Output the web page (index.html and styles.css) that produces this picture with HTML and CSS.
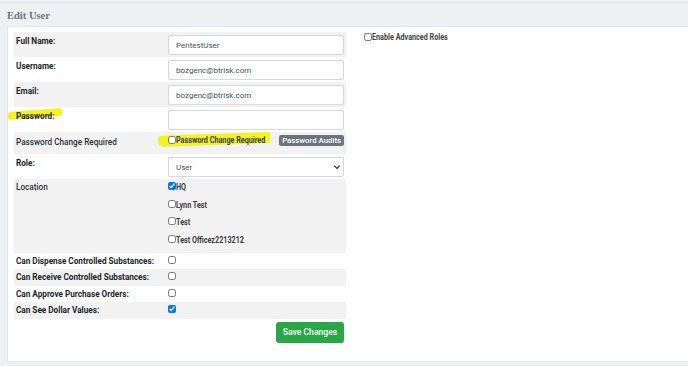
FILE: index.html
```html
<!DOCTYPE html>
<html>
<head>
<meta charset="utf-8">
<link rel="stylesheet" href="styles.css">
</head>
<body>
<div class="page">
  <h1 class="title">Edit User</h1>
  <div class="card">
    <div class="cols">
      <div class="form-col">
        <table class="user-form">
          <colgroup><col class="c-label"><col class="c-value"></colgroup>
          <tr>
            <td class="lbl">Full Name:</td>
            <td class="val"><input class="field" type="text" value="PentestUser"></td>
          </tr>
          <tr>
            <td class="lbl">Username:</td>
            <td class="val"><input class="field" type="text" value="bozgenc@btrisk.com"></td>
          </tr>
          <tr>
            <td class="lbl">Email:</td>
            <td class="val"><input class="field" type="text" value="bozgenc@btrisk.com"></td>
          </tr>
          <tr>
            <td class="lbl hl-cell"><span class="hl hl-pass"></span><span class="txt">Password:</span></td>
            <td class="val"><input class="field" type="password" value=""></td>
          </tr>
          <tr class="pcr-row">
            <td class="lbl plain">Password Change Required</td>
            <td class="val pcr">
              <label class="cb hl-cell"><span class="hl hl-pcr"></span><input type="checkbox"><span class="cond">Password Change Required</span></label>
              <button class="btn-audit" type="button">Password Audits</button>
            </td>
          </tr>
          <tr>
            <td class="lbl">Role:</td>
            <td class="val">
              <div class="select-wrap">
                <select class="field sel"><option>User</option></select>
                <svg class="chev" width="8" height="6" viewBox="0 0 8 6"><path d="M1.2 1.6 L4 4.4 L6.8 1.6" fill="none" stroke="#333" stroke-width="1.2"/></svg>
              </div>
            </td>
          </tr>
          <tr>
            <td class="lbl plain-top">Location</td>
            <td class="val loc">
              <label class="cb loc-item"><input type="checkbox" checked><span class="cond">HQ</span></label>
              <label class="cb loc-item"><input type="checkbox"><span class="cond">Lynn Test</span></label>
              <label class="cb loc-item"><input type="checkbox"><span class="cond">Test</span></label>
              <label class="cb loc-item"><input type="checkbox"><span class="cond">Test Officez2213212</span></label>
            </td>
          </tr>
          <tr class="cb-row">
            <td class="lbl">Can Dispense Controlled Substances:</td>
            <td class="val"><input type="checkbox"></td>
          </tr>
          <tr class="cb-row">
            <td class="lbl">Can Receive Controlled Substances:</td>
            <td class="val"><input type="checkbox"></td>
          </tr>
          <tr class="cb-row">
            <td class="lbl">Can Approve Purchase Orders:</td>
            <td class="val"><input type="checkbox"></td>
          </tr>
          <tr class="cb-row">
            <td class="lbl">Can See Dollar Values:</td>
            <td class="val"><input type="checkbox" checked></td>
          </tr>
        </table>
        <div class="actions">
          <button class="btn-save" type="button">Save Changes</button>
        </div>
      </div>
      <div class="side-col">
        <label class="cb"><input type="checkbox"><span class="cond side-txt">Enable Advanced Roles</span></label>
      </div>
    </div>
  </div>
</div>
</body>
</html>
```
FILE: styles.css
```css
* { box-sizing: border-box; }
html, body { margin: 0; padding: 0; }
body {
  background: #eef0f3;
  font-family: Roboto, "Liberation Sans", sans-serif;
  color: #212529;
  width: 688px;
  height: 366px;
  overflow: hidden;
}
.page {
  border-top: 1px solid #e2e5e9;
  margin-top: 2px;
  padding-left: 7px;
}
.title {
  margin: 0;
  padding: 7px 0 0 0;
  height: 23px;
  font-family: "Roboto Slab", "Liberation Serif", serif;
  font-weight: 700;
  font-size: 10.5px;
  line-height: 12px;
  color: #6c757d;
}
.card {
  background: #fff;
  border: 1px solid #e6e8eb;
  border-right: none;
  width: 700px;
  height: 336px;
  padding: 5px 6px;
  font-size: 8px;
  line-height: 10px;
}
.cols {
  display: flex;
  gap: 18px;
  align-items: flex-start;
}
.form-col { width: 332px; }
.user-form {
  width: 332px;
  border-collapse: collapse;
  table-layout: fixed;
  font-size: 8px;
  line-height: 10px;
}
.c-label { width: 154px; }
.c-value { width: 178px; }
.user-form tr:nth-child(odd) { background: #f2f2f2; }
.user-form td { vertical-align: top; padding: 0; }
.lbl {
  font-weight: 700;
  font-size: 8.2px;
  line-height: 10px;
  padding: 4px 2px 0 2px !important;
  color: #212529;
}
.lbl.plain { font-weight: 500; font-size: 8.2px; padding-top: 5px !important; color: #2a2e33; }
.lbl.plain-top { font-weight: 500; font-size: 8.2px; padding-top: 3px !important; color: #2a2e33; }
.val { padding: 3px 2px 2px 0 !important; font-size: 8px; line-height: 10px; }
.field {
  display: block;
  width: 176px;
  height: 20px;
  margin: 0;
  border: 1px solid #d6d9dd;
  border-radius: 2px;
  background: #fff;
  padding: 0 7px;
  font-family: Roboto, "Liberation Sans", sans-serif;
  font-size: 8px;
  color: #495057;
  outline: none;
}
.select-wrap { position: relative; width: 176px; }
.sel { appearance: none; -webkit-appearance: none; }
.chev { position: absolute; right: 3px; top: 7px; }

input[type=checkbox] {
  width: 8px;
  height: 8px;
  margin: 0;
  vertical-align: top;
}
.cb {
  display: inline-flex;
  align-items: flex-start;
  font-size: 8.6px;
  line-height: 10px;
  color: #3a3f44;
}
.cb input { margin-top: 1px; }
.cond {
  display: inline-block;
  font-weight: 700;
  transform: scaleX(0.84);
  transform-origin: left center;
  white-space: nowrap;
}
.hl-cell { position: relative; }
.hl {
  position: absolute;
  background: #f6f31a;
  border-radius: 3px;
  z-index: 0;
}
.hl-cell > input, .hl-cell > .txt, .hl-cell > .cond { position: relative; z-index: 1; }
.hl-pass { left: -6px; top: 3px; width: 54px; height: 8px; transform: skewY(-4deg); }
.hl-pcr { left: -10px; top: -1px; width: 112px; height: 11px; transform: skewY(-2deg); border-radius: 4px 2px 2px 6px; }

.pcr-row td { height: 22px; }
.pcr {
  display: flex;
  align-items: flex-start;
  justify-content: space-between;
  padding-top: 3px !important;
}
.pcr .cb { width: 100px; }
.btn-audit {
  height: 11px;
  padding: 0 3px;
  margin: 0;
  border: none;
  border-radius: 2px;
  background: #6c757d;
  color: #fff;
  font-family: Roboto, "Liberation Sans", sans-serif;
  font-size: 7.8px;
  line-height: 11px;
  font-weight: 500;
}
.loc { padding: 2px 0 2px 0 !important; }
.loc-item { display: flex; height: 17.5px; }
.loc-item .cond { margin-top: 1px; }
.cb-row td { height: 16.4px; }
.cb-row .lbl { padding-top: 3px !important; }
.cb-row .val { padding: 3px 0 0 0 !important; }

.actions {
  display: flex;
  justify-content: flex-end;
  padding: 3px 2px 0 0;
}
.btn-save {
  width: 68px;
  height: 21px;
  margin: 0;
  border: none;
  border-radius: 3px;
  background: #28a745;
  color: #fff;
  font-family: Roboto, "Liberation Sans", sans-serif;
  font-size: 8.6px;
  font-weight: 500;
}
.side-col { padding-top: 0; display: flex; }
.side-txt { font-size: 8.6px; color: #444; }
```
